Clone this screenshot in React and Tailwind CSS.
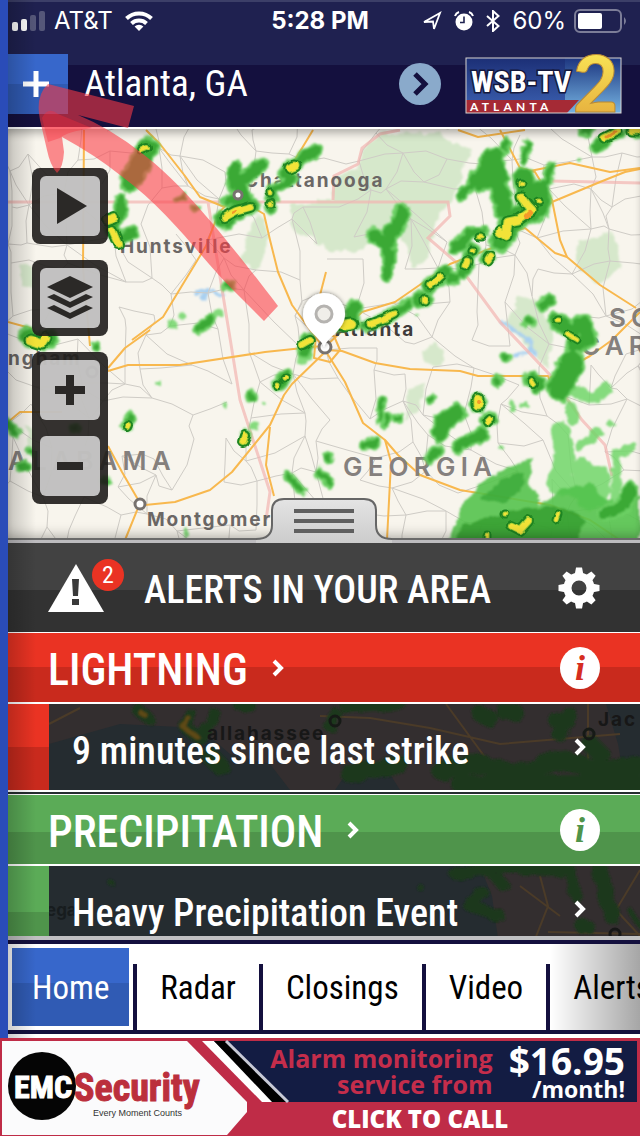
import { useState } from 'react';

const tabs = ['Home', 'Radar', 'Closings', 'Video', 'Alerts'];

const parks = [
  'M333 200 L334 178 L358 168 L362 150 L378 134 L440 133 L452 142 L470 150 L462 175 L452 201 L440 210 L432 240 L425 262 L412 268 L408 250 L395 225 L372 240 L358 252 L330 250 L312 238 L318 200 Z',
  'M291 206 L318 203 L322 236 L300 238 L291 224 Z',
  'M256 214 L268 226 L266 250 L255 270 L240 262 L248 238 Z',
  'M580 240 L612 232 L618 250 L622 268 L598 284 L574 262 Z',
  'M520 295 L536 300 L552 330 L548 370 L534 352 L506 325 Z',
  'M422 350 L436 342 L444 352 L440 366 L424 364 Z',
  'M408 390 L424 384 L420 408 L406 420 Z',
  'M20 265 L32 268 L34 288 L22 286 Z',
  'M26 426 L34 428 L36 450 L28 448 Z',
];

const borders = [
  'M8 202 H448 L450 216 L428 238 L456 262 L500 322 L550 375 L582 420 L605 445 L612 476',
  'M333 200 L334 176 L358 164 L362 148 L380 134 L400 130',
  'M552 181 L640 183',
  'M208 202 L214 240 L230 338 L240 400 L270 492 L266 520',
];

const highways = [
  'M146 130 L160 144 L185 176 L200 197 L222 206 L245 203 L264 214 L270 240 L278 272 L292 305 L322 346',
  'M84 130 L83 268 L90 346',
  'M132 340 L163 317 L206 246 L218 214 L235 195',
  'M290 168 L313 130',
  'M306 320 L320 295 L326 272',
  'M8 322 L30 328 L52 345',
  'M108 371 L128 365 L180 365 L265 352 L322 346',
  'M108 368 L125 348 L150 330',
  'M108 446 L122 472 L140 503 L125 540',
  'M145 505 L175 502 L210 490 L232 472 L270 425 L284 395 L292 384 L325 352',
  'M270 427 L266 465 L274 496',
  'M325 350 L342 351 L375 363 L410 369 L460 371 L478 376 L548 376 L552 386',
  'M325 350 L345 382 L363 423 L385 440 L398 455 L420 475 L460 490 L550 505 L590 520 L620 540',
  'M385 440 L391 462 L387 540',
  'M325 347 L362 312 L395 302 L450 264 L500 245 L552 202 L600 182 L625 172 L640 169',
  'M500 130 L520 168 L535 172 L552 200 L560 240 L567 257',
  'M530 171 L570 163 L610 172 L640 168',
  'M458 130 L478 137 L525 130',
  'M510 232 L525 228 L555 253 L567 257 L600 285 L636 308',
  'M640 312 L612 340 L590 356 L550 378',
  'M8 422 L20 412 L62 412',
  'M316 336 L334 336 L340 350 L330 362 L314 358 Z',
];

// [path, stroke width]
const lightRain = [
  ['M560 432 L565 460 L558 484 L580 490', 20],
  ['M580 446 L598 432', 9],
  ['M615 500 L617 468 L616 455 L632 447', 9],
  ['M570 405 L574 420 M575 392 L594 398 L606 388', 11],
  ['M512 402 L513 410 M523 404 h1 M610 423 h2', 6],
  ['M302 360 L308 356 M254 426 h1', 9],
  ['M130 414 L131 424', 7],
  ['M186 530 L187 536', 4],
  ['M157 384 h1 M224 406 h1 M264 405 h1 M502 447 h1 M417 315 h1 M578 161 h1 M592 150 h1', 4],
  ['M171 324 h2 M182 316 h1 M214 318 L220 313', 7],
  ['M590 500 L600 490 L580 470 L600 478', 22],
];

const rain = [
  ['M148 146 L140 164 L130 182', 20],
  ['M122 200 L120 214 L112 228 L120 240 L132 233', 11],
  ['M234 168 L234 184 L246 178 L262 164 M240 186 L246 200 L228 200', 13],
  ['M222 219 L236 212 L252 206 M226 222 h3', 14],
  ['M284 174 L300 160 L316 150', 11],
  ['M292 178 L272 190 L271 208', 10],
  ['M176 200 L184 198 M194 208 h1', 6],
  ['M226 286 h5', 8],
  ['M198 328 L212 320', 9],
  ['M28 336 L44 342 L50 338', 16],
  ['M95 346 h1 M75 428 h1 M30 452 h1 M22 467 h5 M105 480 h1', 7],
  ['M494 156 L486 172 L480 182 L500 176 L494 160 L500 192 L504 208', 18],
  ['M474 178 L462 196', 8],
  ['M528 144 L524 160 M507 142 L505 148', 8],
  ['M524 178 L526 196 L540 190 L538 210 L520 216 L508 226 L500 242', 20],
  ['M551 166 L548 184', 7],
  ['M402 210 L398 228 L388 232 L388 252 L388 274 M374 234 L386 246', 13],
  ['M455 248 L466 240 L470 232 L482 232', 11],
  ['M472 250 L466 266 L462 272 M488 258 h1 M453 278 h1', 12],
  ['M444 272 L430 286 M420 298 L426 300', 14],
  ['M366 326 L384 320 L408 304', 11],
  ['M340 324 L352 322 L354 308', 14],
  ['M598 146 L612 136 L620 134 M584 130 h5 M630 131 h6', 10],
  ['M542 307 L550 300 M528 321 h2', 9],
  ['M556 320 L572 332 L584 322 L590 338 L574 346', 15],
  ['M505 357 h1 M497 382 h1', 9],
  ['M530 380 L538 384', 15],
  ['M572 362 L564 380 L560 388', 24],
  ['M478 402 v2 M488 420 h1', 15],
  ['M456 412 L444 424 L440 432', 18],
  ['M482 434 L466 442 L456 448 M438 450 L430 458', 11],
  ['M430 398 h1 M397 418 h1', 8],
  ['M382 400 L380 420 M386 424 L388 416', 6],
  ['M366 445 L374 443', 10],
  ['M328 456 v3 M320 472 L330 483', 8],
  ['M308 340 L304 352', 13],
  ['M277 386 L286 376', 12],
  ['M253 396 v2 M244 440 L246 434', 9],
  ['M127 426 L131 418 M8 424 L16 433', 9],
  ['M286 475 L294 482 L302 490', 7],
  ['M630 490 L626 504 L606 512', 14],
];

const heavy = [
  ['M142 150 L147 148', 4],
  ['M108 220 L114 218 M112 230 L118 244', 6],
  ['M225 217 L236 211 L250 207', 6],
  ['M290 168 L295 166', 7],
  ['M270 192 v1 M271 203 v1', 3],
  ['M30 340 L42 344 L46 338', 7],
  ['M521 183 v1 M539 201 v1', 3],
  ['M522 198 L528 206 L532 210 L518 220 L508 222 L506 236 L500 232', 7],
  ['M479 237 h2 M472 251 h1', 3],
  ['M467 261 L465 266 M490 257 L488 260', 5],
  ['M440 277 L431 285 M424 299 v2', 5],
  ['M370 324 L384 319 L394 314', 5],
  ['M344 325 L352 324', 9],
  ['M604 138 L618 131 M632 131 L638 131', 5],
  ['M567 334 L577 340 M557 320 h2', 3],
  ['M532 381 L534 384', 4],
  ['M478 400 v4', 9],
  ['M487 422 L490 419', 4],
  ['M303 345 L310 341', 6],
  ['M277 386 L278 384 M286 377 L284 379', 3],
  ['M245 436 L243 442', 6],
  ['M127 427 L128 425', 4],
  ['M512 526 L520 530 L528 521', 6],
  ['M504 514 h1 M558 514 L556 520 M487 535 v3', 3],
];

const severe = [
  ['M526 217 L530 213', 6],
  ['M478 402 h1', 4],
  ['M607 137 L615 132', 3],
  ['M232 213 L236 211', 2],
];

// country roads: a jittered grid with some of its edges left out
const countyRoads = (() => {
  let seed = 7;
  const rnd = () => {
    seed = (seed * 16807) % 2147483647;
    return seed / 2147483647;
  };
  const step = 36;
  const pts = [];
  for (let r = 0; r < 14; r++) {
    const row = [];
    for (let c = 0; c < 20; c++) {
      row.push([Math.round(-10 + c * step + rnd() * 28), Math.round(110 + r * step + rnd() * 28)]);
    }
    pts.push(row);
  }
  const seg = (a, b) => {
    const mx = Math.round((a[0] + b[0]) / 2 + rnd() * 10 - 5);
    const my = Math.round((a[1] + b[1]) / 2 + rnd() * 10 - 5);
    return `M${a[0]} ${a[1]} L${mx} ${my} L${b[0]} ${b[1]}`;
  };
  let d = '';
  for (let r = 0; r < 13; r++) {
    for (let c = 0; c < 19; c++) {
      if (rnd() < 0.7) d += seg(pts[r][c], pts[r][c + 1]);
      if (rnd() < 0.7) d += seg(pts[r][c], pts[r + 1][c]);
      if (rnd() < 0.25) d += seg(pts[r][c], pts[r + 1][c + 1]);
    }
  }
  return d;
})();

function Strokes({ items, color, extra = 0 }) {
  return (
    <g fill="none" stroke={color} strokeLinecap="round" strokeLinejoin="round">
      {items.map(([d, w]) => <path key={d} d={d} strokeWidth={w + extra} />)}
    </g>
  );
}

function RadarMap() {
  return (
    <svg viewBox="8 129 632 414" preserveAspectRatio="xMidYMid slice" className="absolute inset-0 h-full w-full" role="img" aria-label="Radar map">
      <defs>
        <filter id="rough" x="-5%" y="-5%" width="110%" height="110%">
          <feTurbulence type="fractalNoise" baseFrequency="0.09" numOctaves="3" seed="4" />
          <feDisplacementMap in="SourceGraphic" scale="9" xChannelSelector="R" yChannelSelector="G" />
          <feGaussianBlur stdDeviation="0.8" />
        </filter>
        <filter id="core" x="-5%" y="-5%" width="110%" height="110%">
          <feTurbulence type="fractalNoise" baseFrequency="0.1" numOctaves="1" seed="11" />
          <feDisplacementMap in="SourceGraphic" scale="6" xChannelSelector="R" yChannelSelector="G" />
          <feGaussianBlur stdDeviation="0.6" />
        </filter>
        <filter id="pinShadow" x="-40%" y="-40%" width="180%" height="180%">
          <feDropShadow dx="0" dy="0" stdDeviation="2" floodOpacity="0.5" />
        </filter>
      </defs>
      <rect x="8" y="129" width="632" height="414" fill="#f8f5ed" />
      <g fill="#d6e8cb" filter="url(#rough)">
        {parks.map(d => <path key={d} d={d} />)}
      </g>
      <g fill="none" stroke="#a9d0f0" strokeLinecap="round" filter="url(#rough)">
        <path d="M196 294 L208 290 M203 298 L214 290 L222 296" strokeWidth="4" />
        <path d="M502 322 L516 332 L530 342 L534 354 M514 356 L530 350" strokeWidth="4" />
      </g>
      <path d={countyRoads} fill="none" stroke="#cfccc6" strokeWidth="1" />
      <g fill="none" stroke="#f3b5b2" strokeWidth="3" opacity="0.7">
        {borders.map(d => <path key={d} d={d} />)}
      </g>
      <g fill="none" stroke="#f8b84e" strokeWidth="2" strokeLinejoin="round">
        {highways.map(d => <path key={d} d={d} />)}
      </g>

      <g fill="#6b6765" fontFamily="Inter, Roboto, sans-serif" fontWeight="700" fontSize="19" className="tracking-widest">
        <text x="244" y="187">Chattanooga</text>
        <text x="120" y="253">Huntsville</text>
        <text x="8" y="365">ngham</text>
        <text x="147" y="526">Montgomery</text>
        <text x="335" y="336" fill="#3f3b3a">Atlanta</text>
      </g>
      <g fill="#85807d" fontFamily="Inter, Roboto, sans-serif" fontWeight="600" fontSize="26" className="tracking-[0.2em]">
        <text x="8" y="470">ALABAMA</text>
        <text x="343" y="476">GEORGIA</text>
        <text x="609" y="327">SOUTH</text>
        <text x="581" y="355">CAROLINA</text>
      </g>

      <g filter="url(#rough)">
        <g opacity="0.85">
          <Strokes items={lightRain} color="#72d66a" />
        </g>
        <path d="M444 545 L456 522 L466 500 L480 484 L500 470 L532 460 L528 482 L540 504 L562 490 L590 482 L606 500 L640 496 L640 545 Z" fill="#54c34c" opacity="0.9" />
        <path d="M450 545 L466 524 L520 508 L560 506 L584 520 L576 545 Z" fill="#2f9a2c" opacity="0.75" />
        <path d="M480 500 L500 480 L524 472 L520 492 L500 504 Z" fill="#38a534" opacity="0.7" />
        <Strokes items={rain} color="#6cd063" extra={3} />
        <Strokes items={rain} color="#3aa935" extra={-2} />
      </g>
      <g filter="url(#core)">
        <Strokes items={heavy} color="#1f8420" extra={6} />
        <Strokes items={heavy} color="#a8cf38" extra={2} />
        <Strokes items={heavy} color="#f2e338" />
        <Strokes items={severe} color="#f39a2b" />
      </g>

      <g fill="#fff" stroke="#77726f" strokeWidth="3">
        <circle cx="238" cy="195" r="4" />
        <circle cx="140" cy="504" r="5" />
        <circle cx="92" cy="372" r="5" />
        <circle cx="325" cy="347" r="6" />
      </g>
      <g filter="url(#pinShadow)">
        <path d="M324 347 C320 336 303 330 303 314 A21 21 0 0 1 345 314 C345 330 328 336 324 347 Z" fill="#fff" />
      </g>
      <circle cx="324" cy="314" r="8" fill="#f0eee9" stroke="#b5b3b0" strokeWidth="3" />
    </svg>
  );
}

function DarkMap({ variant }) {
  return (
    <svg viewBox="49 0 591 86" preserveAspectRatio="xMidYMin slice" className="absolute inset-0 h-full w-full" aria-hidden="true">
      <defs>
        <filter id={`dark${variant}`} x="-5%" y="-20%" width="110%" height="140%">
          <feTurbulence type="fractalNoise" baseFrequency="0.07" numOctaves="2" seed="9" />
          <feDisplacementMap in="SourceGraphic" scale="9" />
          <feGaussianBlur stdDeviation="1.2" />
        </filter>
      </defs>
      <rect x="49" width="591" height="86" fill="#252c30" />
      {variant === 'lightning' ? (
        <g>
          <path d="M49 0 H606 L618 40 L626 86 H400 L390 70 L350 64 L335 86 H290 L270 60 L230 50 L200 24 L120 20 L49 40 Z" fill="#332e2f" />
          <path d="M49 20 L80 4 M320 12 L370 14 L430 24 L500 40 L620 30 M446 0 L490 60 L510 86 M588 0 V60" fill="none" stroke="#4b3b28" strokeWidth="2" />
          <g filter={`url(#dark${variant})`} fill="none" stroke="#1b371b" strokeLinecap="round" strokeLinejoin="round">
            <path d="M138 6 L148 14 M190 10 L186 24 L200 34 L214 10 M240 2 h10 M335 10 L330 22 M345 2 L400 0" strokeWidth="12" />
            <path d="M480 10 L490 14 M505 8 h10 M556 16 L570 12 L560 30" strokeWidth="16" />
            <path d="M210 52 L220 62 M350 70 L400 60 M440 66 L480 60 L520 70 L560 56 L600 66 L640 62 M460 80 L640 80 M590 40 L600 50" strokeWidth="18" />
            <path d="M188 14 L184 24 L196 32 M140 8 L146 12" strokeWidth="5" stroke="#5e4a16" />
          </g>
          <g fill="#171717" fontFamily="Inter, Roboto, sans-serif" fontWeight="700" fontSize="19" className="tracking-widest">
            <text x="207" y="36">allahassee</text>
            <text x="598" y="22">Jac</text>
          </g>
          <g fill="none" stroke="#161a16" strokeWidth="3">
            <circle cx="335" cy="17" r="5" />
            <circle cx="589" cy="30" r="5" />
          </g>
        </g>
      ) : (
        <g>
          <path d="M480 0 H640 V86 H500 L492 30 Z" fill="#332e2f" />
          <path d="M540 10 L548 40 L530 86 M640 4 L616 44 L640 70 M548 66 L640 68 M520 20 L560 50" fill="none" stroke="#4b3b28" strokeWidth="2" />
          <g filter={`url(#dark${variant})`} fill="none" stroke="#1b371b" strokeLinecap="round" strokeLinejoin="round">
            <path d="M456 8 L490 4 L504 20 M482 26 L470 40 L500 50 M570 4 L576 30 M580 60 h8" strokeWidth="12" />
            <path d="M600 2 L606 30 L612 50 M500 0 L560 2" strokeWidth="16" />
            <path d="M630 44 L640 60 M420 22 h2 M112 18 h1" strokeWidth="5" />
          </g>
          <circle cx="615" cy="68" r="5" fill="none" stroke="#171717" strokeWidth="3" />
          <text x="46" y="50" fill="#171c1e" fontFamily="Inter, Roboto, sans-serif" fontWeight="700" fontSize="17">ega</text>
        </g>
      )}
    </svg>
  );
}

function Chevron() {
  return (
    <svg viewBox="0 0 12 18" className="h-[18px] w-3 shrink-0" aria-hidden="true">
      <path d="M2 2 L9 9 L2 16" fill="none" stroke="#fff" strokeWidth="4" />
    </svg>
  );
}

function AlertGroup({ title, message, headClass, sideClass, infoClass, variant }) {
  return (
    <section>
      <div className={`flex h-[72px] items-center justify-between border-t border-b-2 border-white pr-10 pl-10 ${headClass}`}>
        <button className="flex items-center gap-6 text-[44px] leading-none font-medium text-white">
          <h2 className="pt-1">{title}</h2>
          <Chevron />
        </button>
        <button
          aria-label={`About ${title.toLowerCase()}`}
          className={`flex h-[42px] w-10 items-center justify-center rounded-[50%] bg-white font-['Liberation_Serif',serif] text-[36px] leading-none font-bold italic ${infoClass}`}
        >
          i
        </button>
      </div>
      <div className="flex h-[86px]">
        <div className={`w-[41px] shrink-0 ${sideClass}`} />
        <button className="relative flex flex-1 items-center justify-between overflow-hidden pr-[54px] pl-[23px] text-left text-white">
          <DarkMap variant={variant} />
          <span className="relative pt-2 text-[38px] leading-none font-medium whitespace-nowrap">{message}</span>
          <span className="relative"><Chevron /></span>
        </button>
      </div>
    </section>
  );
}

function StatusBar() {
  return (
    <div className="grid h-10 grid-cols-3 items-center border-t-2 border-[#3c3f68] pr-3 pl-1 font-['Inter',sans-serif] text-[24px] leading-none text-white">
      <div className="flex items-center gap-2">
        <svg viewBox="0 0 34 20" className="h-5 w-[34px]" aria-label="Signal">
          <rect x="0" y="11" width="6" height="9" rx="2" fill="#fff" />
          <rect x="9" y="8" width="6" height="12" rx="2" fill="#fff" />
          <rect x="18" y="4" width="6" height="16" rx="2" fill="#555779" />
          <rect x="27" y="0" width="6" height="20" rx="2" fill="#555779" />
        </svg>
        <span>AT&amp;T</span>
        <svg viewBox="0 0 28 20" className="ml-1 h-5 w-7" aria-label="Wi-Fi">
          <g fill="none" stroke="#fff" strokeWidth="4">
            <path d="M1.5 7.5 A18 18 0 0 1 26.5 7.5" />
            <path d="M6.5 12.5 A11 11 0 0 1 21.5 12.5" />
          </g>
          <path d="M14 20 L9.6 15.6 A6.2 6.2 0 0 1 18.4 15.6 Z" fill="#fff" />
        </svg>
      </div>
      <div className="text-center font-bold">5:28 PM</div>
      <div className="flex items-center justify-end gap-3">
        <svg viewBox="0 0 20 20" className="h-5 w-5 shrink-0" aria-label="Location">
          <path d="M2 11 L18 2 L12 18 L11 10.5 Z" fill="none" stroke="#fff" strokeWidth="1.8" />
        </svg>
        <svg viewBox="0 0 20 20" className="h-5 w-5 shrink-0" aria-label="Alarm">
          <circle cx="10" cy="11" r="8.5" fill="#fff" />
          <path d="M10 5.5 V11.5 H6" fill="none" stroke="#1f2250" strokeWidth="1.6" />
          <path d="M1 5 Q2 2 5 1 M15 1 Q18 2 19 5" fill="none" stroke="#fff" strokeWidth="2" />
        </svg>
        <svg viewBox="0 0 14 22" className="h-[22px] w-[14px] shrink-0" aria-label="Bluetooth">
          <path d="M1 6 L12.5 16 L7 21 V1 L12.5 6 L1 16" fill="none" stroke="#fff" strokeWidth="2" />
        </svg>
        <span>60%</span>
        <svg viewBox="0 0 54 24" className="-ml-1 h-6 w-[54px] shrink-0" aria-label="Battery">
          <rect x="1" y="1" width="46" height="22" rx="5" fill="none" stroke="#7c7d98" strokeWidth="2" />
          <rect x="4" y="4" width="24" height="16" rx="2" fill="#fff" />
          <path d="M50 8 Q54 12 50 16 Z" fill="#7c7d98" />
        </svg>
      </div>
    </div>
  );
}

function StationLogo() {
  return (
    <svg viewBox="0 0 157 60" className="h-[60px] w-[157px] shrink-0 overflow-visible" role="img" aria-label="WSB-TV 2 Atlanta">
      <defs>
        <linearGradient id="gold" x1="0" y1="0" x2="0" y2="1">
          <stop offset="0" stopColor="#fdf15b" />
          <stop offset="1" stopColor="#e3a63a" />
        </linearGradient>
        <linearGradient id="logoBlue" x1="0" y1="0" x2="0" y2="1">
          <stop offset="0" stopColor="#1c2f76" />
          <stop offset="1" stopColor="#3d63b4" />
        </linearGradient>
        <linearGradient id="logoSky" x1="0" y1="0" x2="0" y2="1">
          <stop offset="0" stopColor="#1d3680" />
          <stop offset="1" stopColor="#76b4e2" />
        </linearGradient>
      </defs>
      <rect x="1" y="4" width="155" height="55" fill="url(#logoBlue)" />
      <rect x="100" y="4" width="56" height="55" fill="url(#logoSky)" />
      <path d="M1 46 H114 L102 59 H1 Z" fill="#a52a35" />
      <text x="6" y="38" fill="#fff" stroke="#14183c" strokeWidth="3" paintOrder="stroke" fontFamily="'Roboto Condensed', sans-serif" fontWeight="700" fontSize="30">WSB-TV</text>
      <text x="5" y="57" fill="#fff" fontFamily="Lato, sans-serif" fontWeight="700" fontSize="12" className="tracking-[0.35em]">ATLANTA</text>
      <rect x="1" y="4" width="155" height="55" fill="none" stroke="#d8d3cf" strokeWidth="1" />
      <text x="108" y="58" fill="url(#gold)" stroke="#b98a35" fontFamily="Lato, sans-serif" fontWeight="900" fontSize="78">2</text>
    </svg>
  );
}

function MapButton({ label, children }) {
  return (
    <button aria-label={label} className="flex h-15 w-15 items-center justify-center rounded-md bg-white/70">
      <svg viewBox="0 0 60 60" className="h-15 w-15" fill="#2b2927" aria-hidden="true">{children}</svg>
    </button>
  );
}

function AdBanner() {
  return (
    <a href="#call" className="relative flex h-[98px] shrink-0 overflow-hidden bg-[#bf2c47] font-['Open_Sans',sans-serif] text-white">
      <div className="absolute inset-0 flex flex-col pt-[3px] pr-[3px]">
        <div className="flex h-[61px] items-start justify-end gap-4 bg-[#131c43] pr-3 font-bold">
          <p className="pt-1 text-right text-[25px] leading-[26px] text-[#c42d4b]">
            Alarm monitoring<br />service from
          </p>
          <p className="pt-1 text-right text-[37px] leading-8">
            $16.95
            <span className="block text-[23px] leading-6">/month!</span>
          </p>
        </div>
        <p className="flex flex-1 items-center justify-center pl-[203px] text-[24px] leading-none font-extrabold">CLICK TO CALL</p>
      </div>
      <svg viewBox="0 0 310 98" className="relative h-[98px] w-[310px] shrink-0" role="img" aria-label="EMC Security">
        <path d="M0 0 H200 L260 64 V98 H0 Z" fill="#bf2c47" />
        <path d="M188 3 H204 L264 64 H245 Z" fill="#bf2c47" />
        <path d="M202 3 H214 L276 64 H262 Z" fill="#fff" />
        <path d="M214 3 H226 L286 64 H272 Z" fill="#000" />
        <path d="M226 3 L288 64" stroke="#c8cad6" strokeWidth="3" />
        <path d="M2 3 H187 L247 64 V74 L227 97 H2 Z" fill="#fbfbfc" />
        <circle cx="42" cy="48" r="34" fill="#050505" />
        <text x="14" y="60" fill="#fff" stroke="#fff" strokeWidth="1" fontFamily="'Roboto Condensed', sans-serif" fontWeight="700" fontSize="32">EMC</text>
        <text x="74" y="63" fill="#bb2f3c" stroke="#bb2f3c" strokeWidth="1" fontFamily="'Roboto Condensed', sans-serif" fontWeight="700" fontSize="38">Security</text>
        <text x="93" y="78" fill="#333" fontFamily="'Liberation Sans', sans-serif" fontSize="9">Every Moment Counts</text>
      </svg>
    </a>
  );
}

function MarkerArrow() {
  return (
    <svg viewBox="0 0 300 340" className="pointer-events-none absolute top-0 left-0 h-[340px] w-[300px]" aria-hidden="true">
      <g fill="#fb3b45" opacity="0.58">
        <path d="M48 84 L134 106 L128 128 L78 115 Q110 128 143 154 C180 182 220 230 278 306 L264 321 L230 287 C196 252 170 212 120 175 Q95 155 62 137 L64 152 Q63 168 57 173 Q50 165 47 150 L40 120 Q35 96 48 84 Z" />
      </g>
      <path d="M42 118 Q48 106 58 114 L92 128 Q66 132 60 138 L48 142 Z" fill="#fb2b3a" opacity="0.35" />
    </svg>
  );
}

export default function App() {
  const [tab, setTab] = useState('Home');

  return (
    <div className="relative flex h-screen flex-col overflow-hidden bg-white font-['Roboto_Condensed','Liberation_Sans',sans-serif]">
      <div className="flex min-h-0 flex-1 bg-[#2a4cb8]">
        <div className="relative ml-2 flex min-w-0 flex-1 flex-col bg-[#252c30]">
          <header className="shrink-0 border-b-2 border-white bg-[linear-gradient(#1f2150_65px,#14103e_65px)]">
            <StatusBar />
            <div className="flex h-[87px] items-center pt-1 pr-[18px] pb-1">
              <button aria-label="Add location" className="flex h-15 w-15 items-center justify-center bg-[linear-gradient(#3767cb_50%,#305bb4_50%)]">
                <svg viewBox="0 0 28 28" className="mr-1 h-7 w-7" aria-hidden="true">
                  <path d="M14 1 V27 M1 14 H27" stroke="#fff" strokeWidth="5" />
                </svg>
              </button>
              <h1 className="flex-1 pl-4 text-[37px] leading-none text-white">Atlanta, GA</h1>
              <button aria-label="Next location" className="mr-6 h-[42px] w-[42px]">
                <svg viewBox="0 0 42 42" className="h-[42px] w-[42px]" aria-hidden="true">
                  <circle cx="21" cy="21" r="21" fill="#8aaacb" />
                  <path d="M16 11 L26 21 L16 31" fill="none" stroke="#14103e" strokeWidth="5" />
                </svg>
              </button>
              <StationLogo />
            </div>
          </header>

          <div className="relative h-[414px] shrink-0 overflow-hidden">
            <RadarMap />
            <div className="absolute inset-0 shadow-[inset_0_-14px_14px_-8px_rgba(0,0,0,0.35),inset_0_8px_8px_-4px_rgba(0,0,0,0.3)]" />
            <div className="absolute top-[39px] left-6 flex flex-col gap-4">
              <div className="rounded-lg bg-[#1e1c1a]/90 p-2">
                <MapButton label="Play radar loop"><path d="M17 12 L47 30 L17 48 Z" /></MapButton>
              </div>
              <div className="rounded-lg bg-[#1e1c1a]/90 p-2">
                <MapButton label="Map layers">
                  <path d="M30 8 L53 19 L30 30 L7 19 Z" />
                  <path d="M7 29 L14 26 L30 34 L46 26 L53 29 L30 40 Z" />
                  <path d="M7 40 L14 37 L30 45 L46 37 L53 40 L30 51 Z" />
                </MapButton>
              </div>
              <div className="flex flex-col gap-4 rounded-lg bg-[#1e1c1a]/90 p-2">
                <MapButton label="Zoom in"><path d="M26 15 h8 v11 h11 v8 h-11 v11 h-8 v-11 h-11 v-8 h11 Z" /></MapButton>
                <MapButton label="Zoom out"><path d="M17 26 h26 v8 h-26 Z" /></MapButton>
              </div>
            </div>
            <div className="absolute inset-x-0 bottom-0 flex flex-col items-center">
              <button aria-label="Drag panel" className="relative z-10 -mb-[5px] block">
                <svg viewBox="0 0 136 46" className="block h-[46px] w-34" aria-hidden="true">
                  <defs>
                    <linearGradient id="handle" x1="0" y1="0" x2="0" y2="1">
                      <stop offset="0" stopColor="#e4e4e4" />
                      <stop offset="1" stopColor="#cccccc" />
                    </linearGradient>
                  </defs>
                  <path d="M0 42 Q16 42 16 28 V14 Q16 2 28 2 H108 Q120 2 120 14 V28 Q120 42 136 42 V46 H0 Z" fill="url(#handle)" />
                  <path d="M0 42 Q16 42 16 28 V14 Q16 2 28 2 H108 Q120 2 120 14 V28 Q120 42 136 42" fill="none" stroke="#666" strokeWidth="2" />
                  <path d="M38 14 H98 M38 24 H98 M38 34 H98" stroke="#5f5f5f" strokeWidth="4" />
                </svg>
              </button>
              <div className="h-[5px] w-full border-t-2 border-[#6a6a6a] bg-[#bdbcbf]" />
            </div>
          </div>

          <div className="flex h-[89px] shrink-0 items-center bg-[linear-gradient(#424242_47px,#323232_47px)] pr-10 pl-10 text-white">
            <div className="relative h-[50px] w-[78px]">
              <svg viewBox="0 0 56 50" className="h-[50px] w-14" aria-hidden="true">
                <path d="M28 1 L56 49 H0 Z" fill="#fff" />
                <path d="M24 16 h7 l-1 17 h-5 Z M24 36 h7 v6 h-7 Z" fill="#3a3a3a" />
              </svg>
              <span className="absolute -top-1 right-0.5 flex h-8 w-8 items-center justify-center rounded-full bg-[#ea3323] text-[24px] leading-none">2</span>
            </div>
            <h2 className="flex-1 pt-1 pl-[18px] text-[38px] leading-none font-medium whitespace-nowrap">ALERTS IN YOUR AREA</h2>
            <button aria-label="Settings">
              <svg viewBox="0 0 42 42" className="h-[42px] w-[42px]" aria-hidden="true">
                <circle cx="21" cy="21" r="11.5" fill="none" stroke="#fff" strokeWidth="8" />
                <g fill="#fff">
                  <path id="tooth" d="M18 0.5 h6 l1.5 8 h-9 Z" />
                  <use href="#tooth" transform="rotate(45 21 21)" />
                  <use href="#tooth" transform="rotate(90 21 21)" />
                  <use href="#tooth" transform="rotate(135 21 21)" />
                  <use href="#tooth" transform="rotate(180 21 21)" />
                  <use href="#tooth" transform="rotate(225 21 21)" />
                  <use href="#tooth" transform="rotate(270 21 21)" />
                  <use href="#tooth" transform="rotate(315 21 21)" />
                </g>
              </svg>
            </button>
          </div>

          <div className="flex min-h-0 flex-1 flex-col overflow-hidden">
            <AlertGroup
              title="LIGHTNING"
              message="9 minutes since last strike"
              variant="lightning"
              headClass="bg-[linear-gradient(#ea3323_50%,#c92a1d_50%)]"
              sideClass="bg-[linear-gradient(#ea3323_50%,#c92a1d_50%)]"
              infoClass="text-[#d62d1f]"
            />
            <div className="h-1 shrink-0 border-t-2 border-white" />
            <AlertGroup
              title="PRECIPITATION"
              message="Heavy Precipitation Event"
              variant="precipitation"
              headClass="bg-[linear-gradient(#5bab57_53%,#4f944b_53%)]"
              sideClass="bg-[linear-gradient(#5bab57_53%,#4f944b_53%)]"
              infoClass="text-[#4f944b]"
            />
          </div>

          <nav className="relative flex h-[102px] shrink-0 overflow-hidden border-t-4 border-[#c0c0c2] bg-white text-[33px] leading-none">
            <div className="mb-1 flex min-w-0 flex-1 overflow-hidden border-y-4 border-[#14103e]">
              {tabs.map((name, i) => (
                <div key={name} className="flex shrink-0">
                  {i > 0 && <div className="mt-5 w-1 bg-[#14103e]" />}
                  <button
                    onClick={() => setTab(name)}
                    className={tab === name
                      ? 'm-1 h-[78px] bg-[linear-gradient(#3767cb_45%,#305bb4_45%)] px-5 text-white'
                      : 'px-[23px] text-black'}
                  >
                    {name}
                  </button>
                </div>
              ))}
            </div>
            <div className="pointer-events-none absolute top-1 right-0 bottom-2 w-[90px] bg-linear-to-r from-black/0 to-black/35" />
          </nav>
          <div className="pointer-events-none absolute inset-y-0 left-0 w-7 bg-linear-to-r from-black/20 to-black/0" />
        </div>
      </div>
      <AdBanner />
      <MarkerArrow />
    </div>
  );
}
